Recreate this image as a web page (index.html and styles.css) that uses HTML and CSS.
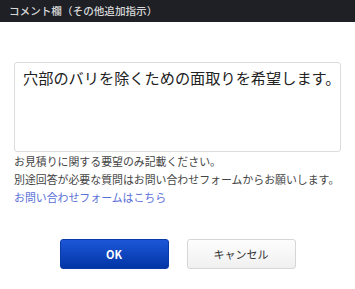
FILE: index.html
```html
<!DOCTYPE html>
<html lang="ja">
<head>
  <meta charset="UTF-8" />
  <title>コメント欄</title>
  <link rel="stylesheet" href="styles.css">
</head>
<body>
  <!-- Dialog title -->
  <div class="dialog-title">コメント欄（その他追加指示）</div>

  <div class="dialog-body">
    <div class="comment-box">穴部のバリを除くための面取りを希望します。</div>

    <div class="notes">
      <p>お見積りに関する要望のみ記載ください。</p>
      <p>別途回答が必要な質問はお問い合わせフォームからお願いします。</p>
      <p><a href="#">お問い合わせフォームはこちら</a></p>
    </div>

    <div class="actions">
      <button class="btn btn-ok">OK</button>
      <button class="btn btn-cancel">キャンセル</button>
    </div>
  </div>
</body>
</html>
```

FILE: styles.css
```css
* {
  margin: 0;
  padding: 0;
  box-sizing: border-box;
}

body {
  font-family: "Noto Sans CJK JP", "Noto Sans", sans-serif;
  background: #fff;
  color: #333;
  width: 355px;
}

/* Title bar */
.dialog-title {
  height: 22px;
  line-height: 22px;
  padding-left: 9px;
  background-color: #1e2026;
  color: #d8d8d8;
  font-size: 10.6px;
  font-weight: 500;
}

.dialog-body {
  padding: 40px 14px 0;
}

.comment-box {
  height: 90px;
  border: 1px solid #dcdcdc;
  border-radius: 3px;
  padding: 3px 0 0 8px;
  font-size: 15.2px;
  line-height: 22px;
  color: #222;
  white-space: nowrap;
}

.notes {
  font-size: 10.9px;
  line-height: 18px;
  color: #444;
}

.notes a {
  color: #5a6fd8;
  text-decoration: none;
}

.actions {
  display: flex;
  justify-content: center;
  gap: 18px;
  margin-top: 33px;
}

.btn {
  width: 109px;
  height: 30px;
  border-radius: 3px;
  font-family: "Noto Sans CJK JP", "Noto Sans", sans-serif;
  font-size: 11px;
  cursor: pointer;
}

.btn-ok {
  background: linear-gradient(#1d57d8, #0235a6);
  border: 1px solid #0a3aa8;
  color: #fff;
  font-weight: bold;
}

.btn-cancel {
  background: linear-gradient(#fdfdfd, #f0f0f0);
  border: 1px solid #d6d6d6;
  color: #333;
}
```
